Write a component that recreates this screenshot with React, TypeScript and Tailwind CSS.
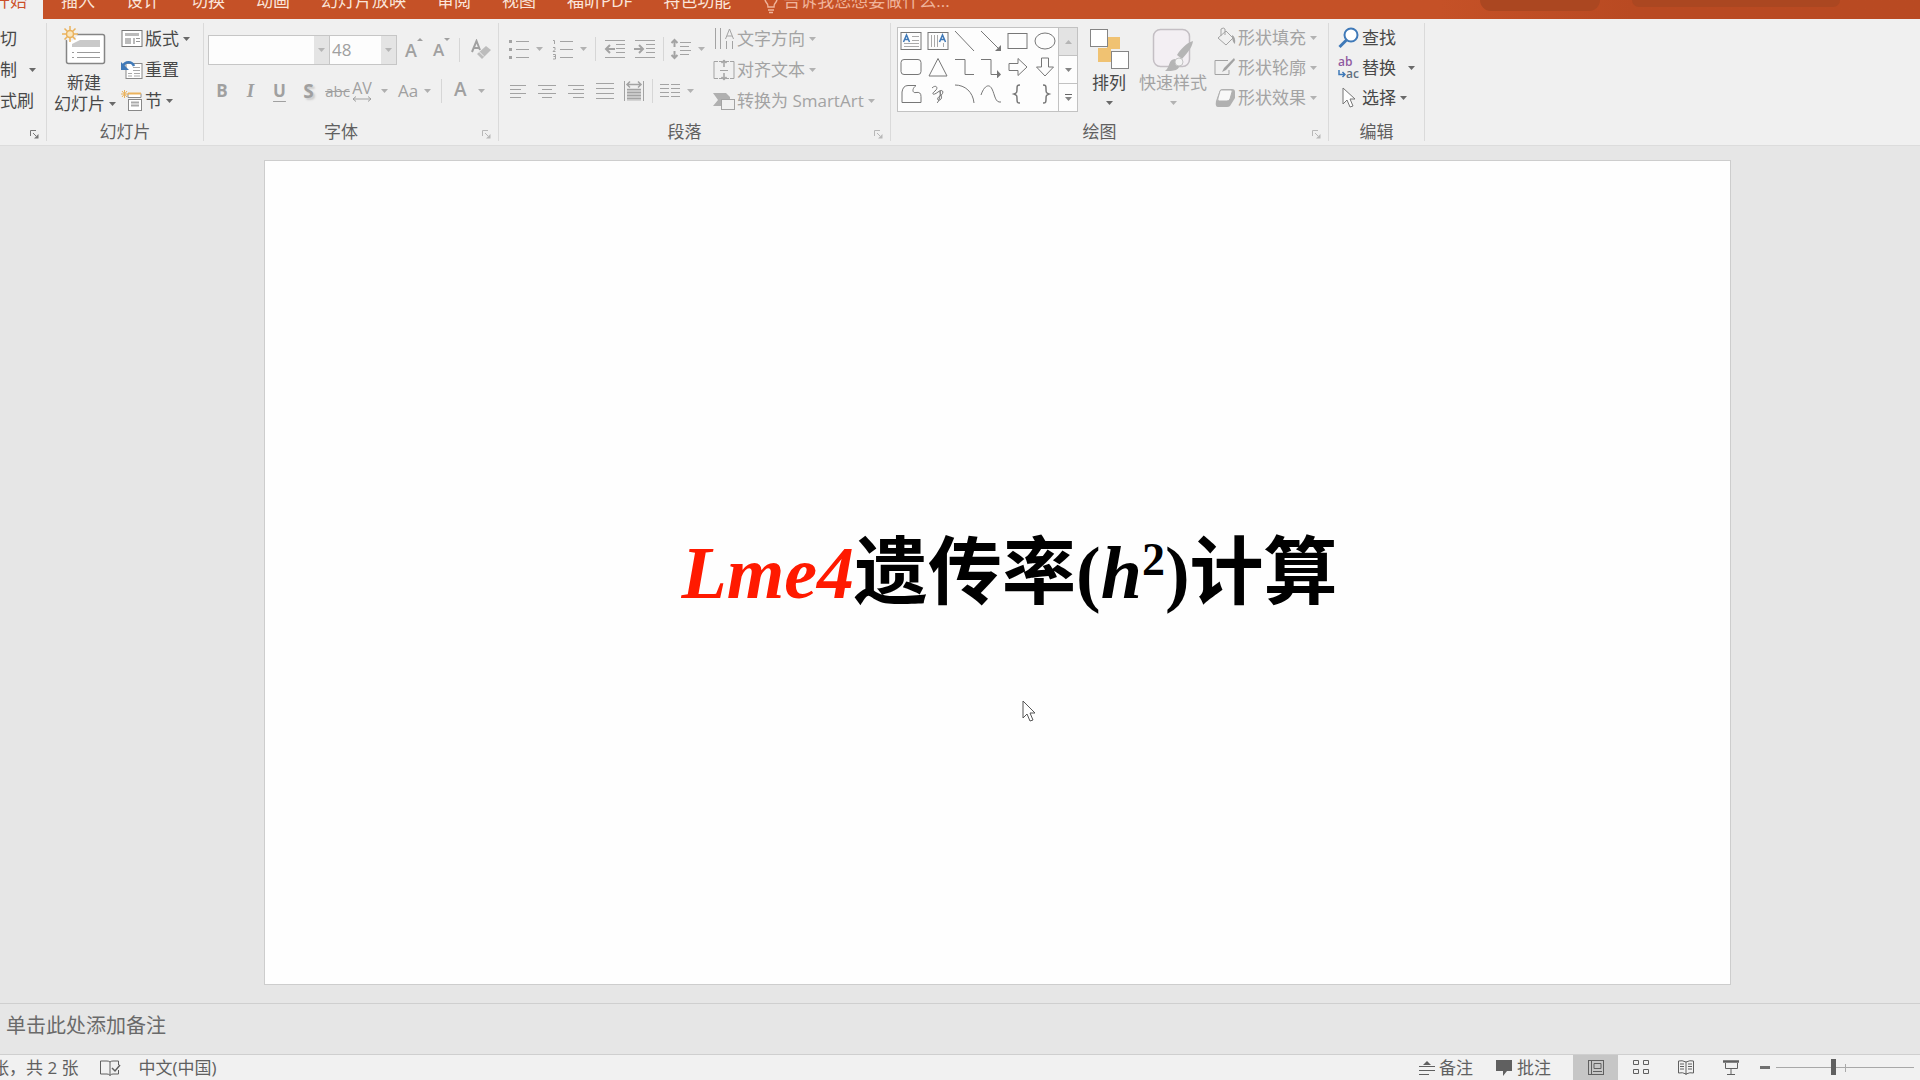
import { useState } from 'react';
import type { ReactNode } from 'react';
import clsx from 'clsx';

const TABS = ['插入', '设计', '切换', '动画', '幻灯片放映', '审阅', '视图', '福昕PDF', '特色功能'];

function Caret({ className }: { className?: string }) {
  return (
    <svg viewBox="0 0 7 4" className={clsx('w-[7px] h-1 shrink-0 opacity-80', className)} fill="currentColor">
      <path d="M0 0h7L3.5 4z" />
    </svg>
  );
}

interface GroupProps {
  label: string;
  className: string;
  launcher?: 'on' | 'off';
  children: ReactNode;
}

function Group({ label, className, launcher, children }: GroupProps) {
  return (
    <section className={clsx('flex flex-col shrink-0 border-r border-[#dadada]', className)}>
      <div className="flex h-[100px]">{children}</div>
      <div className="flex h-[18px] items-center">
        <span className="flex-1 text-center leading-[18px] text-[#606060]">{label}</span>
        {launcher && (
          <button
            aria-label={`${label || '剪贴板'}选项`}
            className={clsx('w-5 pl-1 pt-1', launcher === 'on' ? 'text-[#777]' : 'text-[#b8b8b8]')}
          >
            <svg viewBox="0 0 9 9" className="w-[9px] h-[9px]" fill="none" stroke="currentColor">
              <path d="M.5 6V.5H6M3 3l3 3" />
              <path d="M8.500 4v4.500H4z" fill="currentColor" stroke="none" />
            </svg>
          </button>
        )}
      </div>
    </section>
  );
}

interface RowButtonProps {
  icon?: ReactNode;
  label: string;
  caret?: boolean;
  wideCaret?: boolean;
  disabled?: boolean;
  className?: string;
}

function RowButton({ icon, label, caret, wideCaret, disabled, className }: RowButtonProps) {
  return (
    <button
      disabled={disabled}
      className={clsx('flex items-center whitespace-nowrap', disabled ? 'text-[#a3a3a3]' : 'text-[#484848]', className || 'h-[31px]')}
    >
      {icon && <span className="w-6 shrink-0">{icon}</span>}
      <span>{label}</span>
      {caret && <Caret className={wideCaret ? 'ml-3' : 'ml-1'} />}
    </button>
  );
}

function Divider() {
  return <span className="w-px h-6 bg-[#d6d6d6] shrink-0" />;
}

function Icon({ children, className }: { children: ReactNode; className?: string }) {
  return (
    <svg viewBox="0 0 22 22" className={clsx('w-[22px] h-[22px] shrink-0', className)} fill="none" stroke="currentColor">
      {children}
    </svg>
  );
}

function IconButton({ label, className, caret, children }: { label: string; className: string; caret?: boolean; children: ReactNode }) {
  return (
    <button disabled aria-label={label} className={clsx('flex h-7 items-center justify-center shrink-0', className)}>
      {children}
      {caret && <Caret className="ml-1.5" />}
    </button>
  );
}

/* one horizontal stroke per entry: [x1, x2, y] */
function Lines({ rows }: { rows: number[][] }) {
  return (
    <Icon>
      {rows.map(([x1, x2, y]) => (
        <path key={`${x1}-${y}`} d={`M${x1} ${y}.5H${x2}`} />
      ))}
    </Icon>
  );
}

function ClipboardGroup() {
  return (
    <Group label="" className="w-[47px]" launcher="on">
      <div>
        <RowButton label="切" />
        <RowButton label="制" caret wideCaret />
        <RowButton label="式刷" />
      </div>
    </Group>
  );
}

function SlidesGroup() {
  return (
    <Group label="幻灯片" className="w-[157px]">
      <button className="flex w-[74px] flex-col items-center pt-[3px] text-[#484848]">
        <svg viewBox="0 0 44 40" className="w-11 h-10" fill="none">
          <rect x="4.500" y="8.500" width="38" height="29" rx="2" fill="#fff" stroke="#858585" strokeWidth="1.500" />
          <path d="M18 14h20v7H10v-3z" fill="#c9c9c9" />
          <path d="M10 26.500h2M15 26.500h23M10 31.500h2M15 31.500h23" stroke="#9a9a9a" />
          <circle cx="8" cy="8" r="7" fill="#f0f0f0" />
          <path d="M8 0v4M8 12v4M0 8h4M12 8h4M2.500 2.500l3 3M10.500 10.500l3 3M13.500 2.500l-3 3M5.500 10.500l-3 3" stroke="#eab25c" strokeWidth="1.500" />
          <circle cx="8" cy="8" r="3.500" stroke="#eab25c" strokeWidth="1.500" fill="#fbe6bd" />
        </svg>
        <span className="mt-1.5 leading-[21px]">新建</span>
        <span className="flex items-center pl-0.5 leading-[21px]">
          幻灯片
          <Caret className="ml-1" />
        </span>
      </button>
      <div>
        <RowButton
          label="版式"
          caret
          icon={
            <Icon>
              <rect x="1" y="2.500" width="20" height="16" fill="#fff" stroke="#777" />
              <path d="M4 5h14v3H4z" fill="#bbb" stroke="none" />
              <path d="M4 10h6v6H4zM12 10h2v6h-2z" fill="#bbb" stroke="none" />
              <path d="M15 10.500h4M15 13.500h4" stroke="#999" />
            </Icon>
          }
        />
        <RowButton
          label="重置"
          icon={
            <Icon>
              <rect x="5" y="4.500" width="16" height="15" fill="#fff" stroke="#888" />
              <path d="M12 8.500h7M12 11.500h7M7 14.500h4M13 14.500h6M7 17h4M13 17h6" stroke="#aaa" />
              <path d="M2 7c2-5 9-5 11 0" stroke="#3f79b8" strokeWidth="2.500" />
              <path d="M0 3v8h8z" fill="#3f79b8" stroke="none" />
            </Icon>
          }
        />
        <RowButton
          label="节"
          caret
          icon={
            <Icon>
              <path d="M7 3.500h13v4H7z" fill="#fff" stroke="#8a8a8a" />
              <path d="M7 3.500h13" stroke="#eab25c" strokeWidth="2" />
              <rect x="7.500" y="9.500" width="13" height="11" fill="#fff" stroke="#888" />
              <path d="M10 12.500h8M10 15.500h8" stroke="#aaa" strokeWidth="2" />
              <path d="M3.500 0v8M0 4h8M1 1l5 6M6 1L1 7" stroke="#eab25c" />
            </Icon>
          }
        />
      </div>
    </Group>
  );
}

function FontGroup() {
  return (
    <Group label="字体" className="w-[295px]" launcher="off">
      <div className="flex flex-col gap-3 pl-1 pt-3 text-[#a0a0a0]">
        <div className="flex h-[30px] items-center">
          <label className="flex h-[30px] w-[122px] border border-[#c6c6c6] bg-[#fdfdfd]">
            <input aria-label="字体" disabled className="min-w-0 flex-1" />
            <span className="flex w-[15px] items-center justify-center bg-[#e4e4e4] text-[#aaa]">
              <Caret />
            </span>
          </label>
          <label className="flex h-[30px] w-[67px] border border-l-0 border-[#c6c6c6] bg-[#fdfdfd]">
            <input aria-label="字号" disabled defaultValue="48" className="min-w-0 flex-1 pl-0.5 text-[17px]" />
            <span className="flex w-[15px] items-center justify-center bg-[#e4e4e4] text-[#aaa]">
              <Caret />
            </span>
          </label>
          <button disabled aria-label="增大字号" className="flex w-7 pl-2 text-[18px] font-semibold leading-6">
            A
            <svg viewBox="0 0 6 4" className="w-1.5 h-1" fill="currentColor">
              <path d="M0 3l3-3 3 3z" />
            </svg>
          </button>
          <button disabled aria-label="减小字号" className="flex w-[34px] pl-2 text-[17px] font-semibold leading-6">
            A
            <svg viewBox="0 0 6 4" className="w-1.5 h-1" fill="currentColor">
              <path d="M0 0h6L3 3z" />
            </svg>
          </button>
          <Divider />
          <IconButton label="清除格式" className="w-10">
            <Icon>
              <path d="M3 13L7.500 2 11 11M4.500 9h5" strokeWidth="2" />
              <path d="M8 15l9-8 5 4-9 9z" fill="#bdbdbd" stroke="none" />
              <path d="M10 12.500l5 5" stroke="#f0f0f0" />
            </Icon>
          </IconButton>
        </div>
        <div className="flex h-7 items-center">
          <button disabled className="w-7 font-bold">B</button>
          <button disabled className="w-[29px] text-[19px] font-bold italic font-['Liberation_Serif',serif]">I</button>
          <button disabled className="w-[29px] font-bold underline underline-offset-4">U</button>
          <button disabled className="w-[29px] text-[19px] font-bold [text-shadow:2px_2px_2px_#ccc]">S</button>
          <button disabled className="w-[29px] text-[15px] line-through">abc</button>
          <button disabled className="flex w-9 items-center justify-between text-[16px]">
            <span className="flex flex-col items-center">
              <span className="leading-4">AV</span>
              <svg viewBox="0 0 20 6" className="w-5 h-1.5" fill="none" stroke="currentColor">
                <path d="M1 3h18M4 .5L1 3l3 2.500M16 .5L19 3l-3 2.500" />
              </svg>
            </span>
            <Caret />
          </button>
          <button disabled className="flex w-[43px] items-center justify-between pl-2.5 text-[17px]">
            Aa
            <Caret />
          </button>
          <span className="w-2.5" />
          <Divider />
          <button disabled className="flex w-[43px] items-center justify-between pb-1 pl-3 text-[19px] font-semibold leading-6">
            A
            <Caret className="mt-1" />
          </button>
        </div>
      </div>
    </Group>
  );
}

function ParagraphGroup() {
  return (
    <Group label="段落" className="w-[392px]" launcher="off">
      <div className="flex w-[214px] shrink-0 flex-col gap-[14px] pl-1 pt-3 text-[#a3a3a3]">
        <div className="flex h-7 items-center">
          <IconButton label="项目符号" caret className="w-11">
            <Icon>
              <path d="M8 3.500h13M8 11.500h13M8 19.500h13" />
              <path d="M1 2h3v3H1zM1 10h3v3H1zM1 18h3v3H1z" fill="currentColor" stroke="none" />
            </Icon>
          </IconButton>
          <IconButton label="编号" caret className="w-11">
            <Icon>
              <path d="M8 3.500h13M8 11.500h13M8 19.500h13M1 2.500h1.500V6M1 9.500h2v2l-2 2h2.500M1 16.500h2.500v4.500H1M1.500 18.500h2" />
            </Icon>
          </IconButton>
          <span className="w-1" />
          <Divider />
          <IconButton label="减少缩进" className="w-[37px]">
            <Icon>
              <path d="M1 2.500h20M12 6.500h9M12 10.500h9M12 14.500h9M1 19.500h20" />
              <path d="M11 11H2M6 7l-4 4 4 4" strokeWidth="2" />
            </Icon>
          </IconButton>
          <IconButton label="增加缩进" className="w-6">
            <Icon>
              <path d="M1 2.500h20M12 6.500h9M12 10.500h9M12 14.500h9M1 19.500h20" />
              <path d="M0 11h9M5 7l4 4-4 4" strokeWidth="2" />
            </Icon>
          </IconButton>
          <span className="w-1.5" />
          <Divider />
          <IconButton label="行距" caret className="w-[46px]">
            <Icon>
              <path d="M10 4.500h11M10 8.500h9M10 12.500h11M10 16.500h9" />
              <path d="M4.500 2v7M4.500 13v7M1.500 5l3-3 3 3M1.500 17l3 3 3-3" strokeWidth="2" />
            </Icon>
          </IconButton>
        </div>
        <div className="flex h-7 items-center">
          <IconButton label="左对齐" className="w-[29px]">
            <Lines rows={[[3, 19, 5], [3, 14, 9], [3, 19, 13], [3, 14, 17]]} />
          </IconButton>
          <IconButton label="居中" className="w-[29px]">
            <Lines rows={[[2, 20, 5], [6, 16, 9], [2, 20, 13], [6, 16, 17]]} />
          </IconButton>
          <IconButton label="右对齐" className="w-[29px]">
            <Lines rows={[[3, 19, 5], [8, 19, 9], [3, 19, 13], [8, 19, 17]]} />
          </IconButton>
          <IconButton label="两端对齐" className="w-[29px]">
            <Lines rows={[[2, 20, 3], [2, 20, 8], [2, 20, 13], [2, 20, 18]]} />
          </IconButton>
          <IconButton label="分散对齐" className="w-[29px]">
            <Icon>
              <path d="M1.500 1v20M20.500 1v20" />
              <path d="M4 9h14v12H4z" fill="#d4d4d4" stroke="none" />
              <path d="M4 9.500h14M4 12.500h14M4 15.500h14M4 18.500h14" strokeWidth="1.500" />
              <path d="M4 4.500h14M7 1.500l-3 3 3 3M15 1.500l3 3-3 3" strokeWidth="1.500" />
            </Icon>
          </IconButton>
          <span className="w-1" />
          <Divider />
          <IconButton label="分栏" caret className="w-[46px]">
            <Icon>
              <path d="M1 4.500h9M12 4.500h9M1 8.500h9M12 8.500h9M1 12.500h9M12 12.500h9M1 16.500h9M12 16.500h9" />
            </Icon>
          </IconButton>
        </div>
      </div>
      <div>
        <RowButton
          disabled
          caret
          label="文字方向"
          icon={
            <Icon>
              <path d="M2.500 0v21M7.500 0v21M13.500 21v-8M19.500 21v-8M12.500 11l4-10 4 10M14 8h5" />
            </Icon>
          }
        />
        <RowButton
          disabled
          caret
          label="对齐文本"
          icon={
            <Icon>
              <path d="M5 2.500H1v17h4M17 2.500h4v17h-4M7 11.500h8M6 2.500h3M13 2.500h3M6 19.500h3M13 19.500h3" />
              <path d="M11 1v7M11 14v7M8.500 4L11 1.500 13.500 4M8.500 18l2.500 2.500 2.500-2.500" strokeWidth="1.500" />
            </Icon>
          }
        />
        <RowButton
          disabled
          caret
          label="转换为 SmartArt"
          icon={
            <Icon>
              <path d="M0 3h13l4 4v2H8v7H0l5-6z" fill="#b0b0b0" stroke="none" />
              <rect x="8.500" y="9.500" width="13" height="10" fill="#f0f0f0" />
            </Icon>
          }
        />
      </div>
    </Group>
  );
}

const SHAPES: { name: string; art: ReactNode }[] = [
  { name: '文本框', art: <><rect x="1" y="2.500" width="20" height="17" /><path d="M12 6.500h7M12 10.500h7M4 13.500h15M4 16.500h15" stroke="#aaa" /><path d="M3.500 12l3-7 3 7M5 9.500h3.500" stroke="#3f79b8" strokeWidth="1.500" /></> },
  { name: '竖排文本框', art: <><rect x="1" y="2.500" width="20" height="17" /><path d="M4.500 5v12M7.500 5v12M10.500 5v12M16.500 13v4" stroke="#aaa" /><path d="M12.500 12l3-7 3 7M14 9.500h3.500" stroke="#3f79b8" strokeWidth="1.500" /></> },
  { name: '直线', art: <path d="M1 1l19 20" /> },
  { name: '箭头', art: <><path d="M1 1l19 19" /><path d="M21 15v6h-6z" fill="currentColor" stroke="none" /></> },
  { name: '矩形', art: <rect x="1" y="3.500" width="19" height="15" /> },
  { name: '椭圆', art: <ellipse cx="11" cy="11" rx="10" ry="8" /> },
  { name: '圆角矩形', art: <rect x="1" y="3.500" width="20" height="15" rx="3" /> },
  { name: '三角形', art: <path d="M11 2.500L20 20H2z" /> },
  { name: '肘形连接符', art: <path d="M1 3.500h10v15h9" /> },
  { name: '肘形箭头', art: <><path d="M1 3.500h10v15h9" /><path d="M17 14l4 4.500-4 4z" fill="currentColor" stroke="none" /></> },
  { name: '右箭头', art: <path d="M2 7.500h9v-5l9 8.500-9 8.500v-5H2z" /> },
  { name: '下箭头', art: <path d="M7.500 2v9h-5l8.500 9 8.500-9h-5V2z" /> },
  { name: '任意多边形', art: <path d="M2 9q1-6.500 6-6.500h8c-5 4-3 8 0 7q5-1 5 4v6H2z" /> },
  { name: '自由曲线', art: <path d="M5 5c4-4 7 0 3 3s-2 5 3 1 7 1 2 4-1 6 1 3-2-6-1-8 0 10-3 12" /> },
  { name: '弧形', art: <path d="M1 2c10 0 18 7 19 18" /> },
  { name: '曲线', art: <path d="M1 12C4 3 9 0 12 6s3 14 9 13" /> },
  { name: '左大括号', art: <path d="M13 2c-3 0-3 1-3 4s0 4-3 5c3 1 3 2 3 5s0 4 3 4" strokeWidth="1.500" /> },
  { name: '右大括号', art: <path d="M9 2c3 0 3 1 3 4s0 4 3 5c-3 1-3 2-3 5s0 4-3 4" strokeWidth="1.500" /> },
];

function DrawingGroup() {
  return (
    <Group label="绘图" className="w-[438px]" launcher="off">
      <div className="ml-[6px] mt-1 flex h-[85px] w-[181px] shrink-0 border border-[#c2c2c2] bg-[#fdfdfd]">
        <div className="grid flex-1 grid-cols-6 grid-rows-3 pb-1 text-[#777]">
          {SHAPES.map((s) => (
            <button key={s.name} aria-label={s.name} className="flex items-center justify-center">
              <Icon>{s.art}</Icon>
            </button>
          ))}
        </div>
        <div className="flex w-[19px] flex-col border-l border-[#c2c2c2] text-[#666]">
          <button disabled aria-label="上一行" className="flex flex-1 items-center justify-center bg-[#e3e3e3] text-[#aaa]">
            <Caret className="rotate-180" />
          </button>
          <button aria-label="下一行" className="flex flex-1 items-center justify-center border-y border-[#c2c2c2]">
            <Caret />
          </button>
          <button aria-label="其他" className="flex flex-1 flex-col items-center justify-center gap-0.5">
            <span className="w-[7px] border-t border-current" />
            <Caret />
          </button>
        </div>
      </div>
      <button className="ml-1 flex w-[54px] flex-col items-center pt-1 text-[#484848]">
        <svg viewBox="0 0 40 42" className="h-[42px] w-10" fill="#fff" stroke="#858585">
          <path d="M18 10h13v12H18zM9 21h13v14H9z" fill="#f0c272" stroke="none" />
          <rect x="1.500" y="2.500" width="17" height="17" />
          <rect x="22.500" y="24.500" width="17" height="17" />
        </svg>
        <span className="mt-[3px] leading-[21px]">排列</span>
        <Caret className="mt-2" />
      </button>
      <button disabled className="flex w-[74px] flex-col items-center pt-1 text-[#a3a3a3]">
        <svg viewBox="0 0 42 44" className="h-11 w-[42px]" fill="none">
          <rect x="1.500" y="2.500" width="36" height="37" rx="7" fill="#f3eff3" stroke="#c4bfc4" strokeWidth="1.500" />
          <path d="M41 14c-1 8-8 14-11 18l-5-4c3-5 9-12 16-14z" fill="#b5b5b5" />
          <path d="M13 44c5-3 3-12 10-12 6 0 7 8 1 11-3 1-7 1-11 1z" fill="#b5b5b5" />
          <circle cx="27" cy="35" r="4" fill="#f3f3f3" stroke="#c4c4c4" />
        </svg>
        <span className="mt-px leading-[21px]">快速样式</span>
        <Caret className="mt-2" />
      </button>
      <div className="ml-1">
        <RowButton
          disabled
          caret
          className="h-[30px]"
          label="形状填充"
          icon={
            <Icon>
              <path d="M4 11l8-7 7 7-7 7zM7 9V2q2.500-2 4 0v6" />
              <path d="M18 8q4 2 3 9-3-2-3-9z" fill="currentColor" stroke="none" />
            </Icon>
          }
        />
        <RowButton
          disabled
          caret
          className="h-[30px]"
          label="形状轮廓"
          icon={
            <Icon>
              <path d="M14 3.500H1v14h14V13" />
              <path d="M20 1l1 2-9 10-4 2 2-4z" fill="currentColor" stroke="none" />
            </Icon>
          }
        />
        <RowButton
          disabled
          caret
          className="h-[30px]"
          label="形状效果"
          icon={
            <Icon>
              <path d="M2 14L6 3q1-1 3-1h9q3 0 3 3v6l-5 8q-1 1-3 1H4q-3 0-2-6z" fill="#b0b0b0" stroke="none" />
              <path d="M7 3h10q2 0 1 2l-2 7q-1 2-3 2H5q-2 0-1-3l2-7z" fill="#f8f8f8" stroke="#b0b0b0" />
            </Icon>
          }
        />
      </div>
    </Group>
  );
}

function EditingGroup() {
  return (
    <Group label="编辑" className="w-[96px]">
      <div className="pl-[9px]">
        <RowButton
          className="h-[30px]"
          label="查找"
          icon={
            <Icon>
              <circle cx="13" cy="8" r="6.500" fill="#fff" stroke="#3f79b8" strokeWidth="2" />
              <path d="M8.500 13L1.500 20" stroke="#3f79b8" strokeWidth="3" />
            </Icon>
          }
        />
        <RowButton
          className="h-[30px]"
          label="替换"
          caret
          wideCaret
          icon={
            <span className="block text-left text-[12px] font-semibold leading-3">
              <span className="block text-[#8f5ba0]">ab</span>
              <span className="flex items-center text-[#5f6f80]">
                <svg viewBox="0 0 8 8" className="h-2 w-2" fill="none" stroke="#3f79b8" strokeWidth="1.500">
                  <path d="M1 0v4.500h6M4.500 2L7 4.500 4.500 7" />
                </svg>
                ac
              </span>
            </span>
          }
        />
        <RowButton
          className="h-[30px]"
          label="选择"
          caret
          icon={
            <Icon>
              <path d="M5 1v16l4-4 3 7 3-1-3-7h5z" fill="#fff" stroke="#777" />
            </Icon>
          }
        />
      </div>
    </Group>
  );
}

const VIEWS: { name: string; art: ReactNode }[] = [
  { name: '普通视图', art: <><rect x="3.500" y="3.500" width="15" height="14" /><path d="M6.500 3v15M9 6.500h7v5H9zM8 14.500h9" /></> },
  { name: '幻灯片浏览', art: <path d="M3.500 3.500h5v4h-5zM13.500 3.500h5v4h-5zM3.500 12.500h5v4h-5zM13.500 12.500h5v4h-5z" /> },
  { name: '阅读视图', art: <path d="M11 5Q7 3 3.500 4v12q4-1 7.500 1 4-2 7.500-1V4Q15 3 11 5v13M5 7h4M5 9.500h4M5 12h4M13 7h4M13 9.500h4M13 12h4" /> },
  { name: '幻灯片放映', art: <><path d="M5.500 6v5.500h12V6M11 12v5M7 17.500h8" /><path d="M3 4.500h16" strokeWidth="2.500" /></> },
];

function StatusBar() {
  const [view, setView] = useState('普通视图');
  const [zoom, setZoom] = useState(41);

  return (
    <footer className="flex h-[26px] shrink-0 items-center overflow-hidden border-t border-[#cfcfcf] bg-[#f1f1f1] text-[#606060]">
      <span className="-ml-2 whitespace-nowrap">张，共 2 张</span>
      <button aria-label="拼写检查" className="ml-5">
        <Icon>
          <path d="M11 5q-1-1-3-1H1.500v13H8q2 0 3 1.500V5q1-1 3-1h5.500v4M19.500 13v4H14q-2 0-3 1.500" />
          <path d="M13 11l3 3 5-6" strokeWidth="1.500" />
        </Icon>
      </button>
      <button className="ml-[18px]">中文(中国)</button>
      <div className="ml-auto flex h-full items-center">
        <button className="flex items-center gap-1 pr-5">
          <svg viewBox="0 0 16 20" className="h-5 w-4" fill="none" stroke="currentColor">
            <path d="M4 7l4-4 4 4z" fill="currentColor" stroke="none" />
            <path d="M0 8.500h16M0 12.500h16M0 16.500h10" />
          </svg>
          备注
        </button>
        <button className="flex items-center gap-0.5 pr-[22px]">
          <Icon>
            <path d="M3 3h16v11h-5l-4 5v-5H3z" fill="currentColor" stroke="none" />
          </Icon>
          批注
        </button>
        {VIEWS.map((v) => (
          <button
            key={v.name}
            aria-label={v.name}
            onClick={() => setView(v.name)}
            className={clsx('flex h-full w-[45px] items-center justify-center', view === v.name && 'bg-[#c6c6c6]')}
          >
            <Icon>{v.art}</Icon>
          </button>
        ))}
        <button aria-label="缩小" className="flex w-[23px] justify-center" onClick={() => setZoom(Math.max(0, zoom - 5))}>
          <span className="h-[3px] w-2.5 bg-[#707070]" />
        </button>
        <div className="relative flex w-[138px] items-center">
          <span className="absolute left-1/2 h-2 w-px bg-[#aaa]" />
          <input
            type="range"
            aria-label="显示比例"
            value={zoom}
            onChange={(e) => setZoom(Number(e.target.value))}
            className="h-4 w-full appearance-none bg-transparent [&::-webkit-slider-runnable-track]:h-px [&::-webkit-slider-runnable-track]:bg-[#a8a8a8] [&::-webkit-slider-thumb]:-mt-2 [&::-webkit-slider-thumb]:h-4 [&::-webkit-slider-thumb]:w-[5px] [&::-webkit-slider-thumb]:appearance-none [&::-webkit-slider-thumb]:bg-[#606060]"
          />
        </div>
        <span className="w-1.5" />
      </div>
    </footer>
  );
}

export default function App() {
  return (
    <div className="flex h-screen flex-col overflow-hidden bg-[#e6e6e6] text-[17px] leading-[22px] font-['Open_Sans','Noto_Sans_CJK_SC',sans-serif]">
      <header className="flex h-[19px] shrink-0 items-end overflow-hidden bg-linear-to-r from-[#c55127] from-75% to-[#b94a22] to-85%">
        <nav className="flex h-9 shrink-0 items-center">
          <button className="-ml-[7px] flex h-9 w-[50px] items-center bg-[#f0f0f0] text-[#cb4f2a]">开始</button>
          <div className="ml-[18px] flex items-center gap-[31px] text-[#fbe5da]">
            {TABS.map((tab) => (
              <button key={tab} className="whitespace-nowrap">{tab}</button>
            ))}
          </div>
          <button className="ml-8 flex items-center gap-1 whitespace-nowrap text-[#f0b49b]">
            <svg viewBox="0 0 16 22" className="h-[22px] w-4 mt-1" fill="none" stroke="currentColor" strokeWidth="1.500">
              <path d="M5 15q0-3-2-5a6 6 0 1 1 10 0q-2 2-2 5zM5 18h6M6 20.500h4" />
            </svg>
            告诉我您想要做什么...
          </button>
        </nav>
        <div className="ml-auto flex h-[19px] items-start gap-8 pr-20">
          <span className="h-[11px] w-[120px] rounded-b-full bg-[#ab4721]" />
          <span className="h-[7px] w-[208px] rounded-b-full bg-[#ab4721]" />
        </div>
      </header>

      <div className="flex shrink-0 overflow-hidden border-b border-[#dcdcdc] bg-[#f0f0f0] py-1">
        <ClipboardGroup />
        <SlidesGroup />
        <FontGroup />
        <ParagraphGroup />
        <DrawingGroup />
        <EditingGroup />
      </div>

      <main className="flex min-h-0 flex-1 justify-center pb-[18px] pl-[75px] pt-[14px]">
        <div className="relative flex aspect-video h-full items-center justify-center border border-[#cdcdcd] bg-[#fefefe]">
          <h1 className="whitespace-nowrap pl-6 text-[74px] font-bold leading-[88px] text-black font-['Liberation_Serif','Noto_Sans_CJK_SC',serif]">
            <i className="text-[#ff1a00]">Lme4</i>遗传率(<i>h</i>
            <span className="align-[23px] text-[46px] leading-none">2</span>)计算
          </h1>
          <svg viewBox="0 0 14 22" className="absolute left-[51.7%] top-[65.5%] h-[22px] w-3.5" fill="#fff" stroke="#555">
            <path d="M1 1v17l4-4 3 7 3-1-3-7h5z" />
          </svg>
        </div>
      </main>

      <div className="flex h-[51px] shrink-0 items-start border-t border-[#cfcfcf]">
        <textarea
          aria-label="备注"
          rows={1}
          placeholder="单击此处添加备注"
          className="w-full resize-none px-[6px] pt-2 text-[20px] leading-7 placeholder:text-[#6a6a6a]"
        />
      </div>
      <StatusBar />
    </div>
  );
}
